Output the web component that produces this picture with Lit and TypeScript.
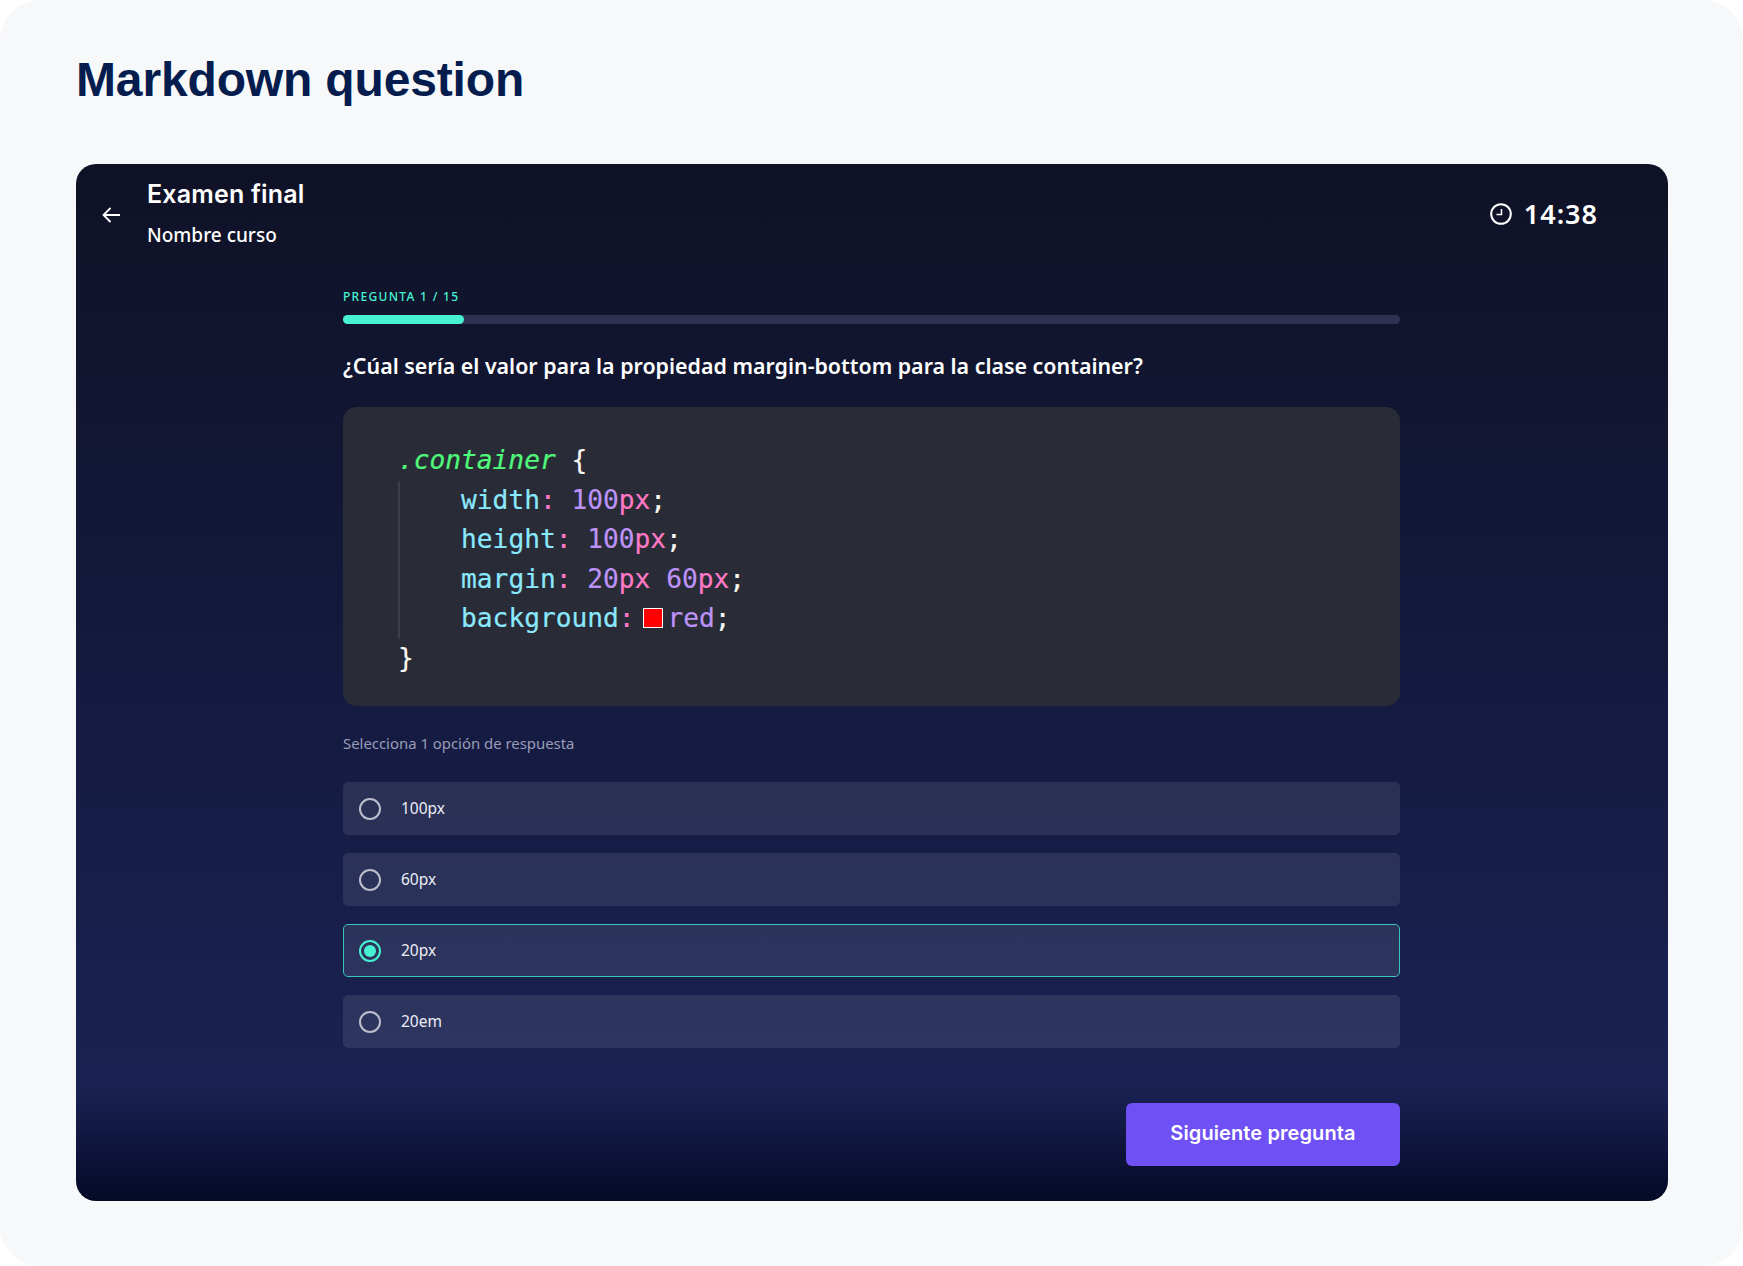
import { LitElement, html, css } from "lit";
import { customElement } from "lit/decorators.js";

@customElement("app-root")
export class AppRoot extends LitElement {
  static styles = css`
    :host { display: block; width: 1743px; height: 1266px; background: #fff; overflow: hidden; }
    * { box-sizing: border-box; }
    .page { width: 1743px; height: 1266px; background: #f7f8fa; border-radius: 40px; padding: 0 75px 0 76px; display: flex; flex-direction: column; }
    h1 { margin: 0; height: 164px; padding-top: 51px; font: 700 48px/58px "Liberation Sans", Arial, sans-serif; color: #051c4e; letter-spacing: -0.15px; }
    .panel { width: 1592px; height: 1037px; border-radius: 20px; display: flex; flex-direction: column; background: linear-gradient(180deg, #0f1226 0%, #141a3f 50%, #1a2253 89%, #050a27 100%); color: #fff; }
    .header { height: 101px; padding: 14px 70px 0 26px; display: flex; align-items: center; }
    .back { width: 18px; height: 16px; margin-right: 27px; flex: none; margin-top: -14px; }
    .names { flex: 1; margin-top: -19px; }
    .course-title { font: 600 25px/34px Inter, sans-serif; letter-spacing: 0.2px; }
    .course-name { font: 500 19px/26px "Noto Sans", sans-serif; margin-top: 11px; }
    .time { display: flex; align-items: center; gap: 12px; font: 600 27px/32px "Noto Sans", sans-serif; letter-spacing: 1px; margin-top: -16px; }
    .content { width: 1057px; margin-left: 267px; display: flex; flex-direction: column; }
    .step { font: 500 12px/16px "Noto Sans", sans-serif; letter-spacing: 1.3px; color: #47f2d3; margin-top: 24px; }
    .track { height: 9px; border-radius: 5px; background: #2f3250; margin-top: 10px; }
    .fill { height: 9px; width: 121px; border-radius: 5px; background: #47f2d3; }
    .q { font: 600 21.400px/30px "Noto Sans", sans-serif; margin-top: 27px; }
    .code { height: 299px; margin-top: 26px; border-radius: 14px; background: #292b36; padding: 34px 0 0 55px; font: 26.200px/39.600px "DejaVu Sans Mono", monospace; color: #f8f8f2; -webkit-text-stroke: 0.2px currentColor; }
    .line { white-space: pre; height: 39.6px; }
    .block { border-left: 2px solid #3d3e4b; width: 500px; }
    .block .line { margin-left: -2px; }
    .sel { color: #50fa7b; font-style: italic; }
    .prop { color: #8be9fd; }
    .colon { color: #ff79c6; }
    .num { color: #bd93f9; }
    .unit { color: #ff79c6; }
    .swatch { display: inline-block; width: 20px; height: 20px; background: #f00; border: 1px solid #fff; vertical-align: -1px; margin: 0 5px 0 8px; }
    .hint { font: 400 14.900px/20px "Noto Sans", sans-serif; color: #9a9db8; margin-top: 27px; }
    .opts { display: flex; flex-direction: column; gap: 18px; margin-top: 29px; }
    .opt { height: 53px; border-radius: 5px; background: rgba(255, 255, 255, 0.09); display: flex; align-items: center; padding-left: 16px; font: 400 15.500px/20px "Noto Sans", sans-serif; color: #eceef6; gap: 20px; }
    .opt.on { border: 1px solid #3cc4b8; padding-left: 15px; }
    .label { margin-top: -2px; }
    .radio { width: 22px; height: 22px; border-radius: 50%; border: 2px solid #bcbecd; flex: none; display: flex; align-items: center; justify-content: center; }
    .on .radio { border-color: #47f2d3; }
    .on .radio::after { content: ""; width: 12px; height: 12px; border-radius: 50%; background: #47f2d3; }
    .foot { display: flex; justify-content: flex-end; margin-top: 55px; }
    .btn { width: 274px; height: 63px; border: 0; border-radius: 6px; background: #6f50f5; color: #fff; font: 600 20px/24px Inter, sans-serif; letter-spacing: 0.1px; padding: 0 0 3px; }
  `;

  render() {
    const options = ["100px", "60px", "20px", "20em"];
    return html`
      <div class="page">
        <h1>Markdown question</h1>
        <section class="panel">
          <header class="header">
            <svg class="back" viewBox="0 0 18 16" fill="none" stroke="#fff" stroke-width="1.8"><path d="M18 8H1.5M8.5 1 1.5 8l7 7"/></svg>
            <div class="names">
              <div class="course-title">Examen final</div>
              <div class="course-name">Nombre curso</div>
            </div>
            <div class="time">
              <svg width="22" height="22" viewBox="0 0 22 22" fill="none" stroke="#fff" stroke-width="2"><circle cx="11" cy="11" r="9.8"/><path d="M11.5 6v5.500H6.500" stroke-width="1.500"/></svg>
              14:38
            </div>
          </header>
          <main class="content">
            <div class="step">PREGUNTA 1 / 15</div>
            <div class="track"><div class="fill"></div></div>
            <div class="q">¿Cúal sería el valor para la propiedad margin-bottom para la clase container?</div>
            <div class="code">
              <div class="line"><span class="sel">.container</span> {</div>
              <div class="block">
                <div class="line">    <span class="prop">width</span><span class="colon">:</span> <span class="num">100</span><span class="unit">px</span>;</div>
                <div class="line">    <span class="prop">height</span><span class="colon">:</span> <span class="num">100</span><span class="unit">px</span>;</div>
                <div class="line">    <span class="prop">margin</span><span class="colon">:</span> <span class="num">20</span><span class="unit">px</span> <span class="num">60</span><span class="unit">px</span>;</div>
                <div class="line">    <span class="prop">background</span><span class="colon">:</span><span class="swatch"></span><span class="num">red</span>;</div>
              </div>
              <div class="line">}</div>
            </div>
            <div class="hint">Selecciona 1 opción de respuesta</div>
            <div class="opts">
              ${options.map((o, i) => html`<div class="opt ${i === 2 ? "on" : ""}"><span class="radio"></span><span class="label">${o}</span></div>`)}
            </div>
            <div class="foot"><button class="btn">Siguiente pregunta</button></div>
          </main>
        </section>
      </div>
    `;
  }
}
